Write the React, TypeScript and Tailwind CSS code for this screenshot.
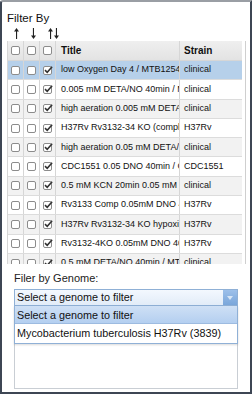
import clsx from 'clsx';

type Row = { title: string; strain: string };

const rows: Row[] = [
  { title: 'low Oxygen Day 4 / MTB1254', strain: 'clinical' },
  { title: '0.005 mM DETA/NO 40min / MTB', strain: 'clinical' },
  { title: 'high aeration 0.005 mM DETA/NO', strain: 'clinical' },
  { title: 'H37Rv Rv3132-34 KO (complemented)', strain: 'H37Rv' },
  { title: 'high aeration 0.05 mM DETA/NO', strain: 'clinical' },
  { title: 'CDC1551 0.05 DNO 40min / CDC', strain: 'CDC1551' },
  { title: '0.5 mM KCN 20min 0.05 mM DNO', strain: 'clinical' },
  { title: 'Rv3133 Comp 0.05mM DNO 40min', strain: 'H37Rv' },
  { title: 'H37Rv Rv3132-34 KO hypoxia', strain: 'H37Rv' },
  { title: 'Rv3132-4KO 0.05mM DNO 40min', strain: 'H37Rv' },
  { title: '0.5 mM DETA/NO 40min / MTB', strain: 'clinical' },
];

function Box({ checked }: { checked?: boolean }) {
  return (
    <div className="w-[9px] h-[9px] border border-[#8c8c8c] rounded-[2px] bg-white relative">
      {checked && (
        <svg viewBox="0 0 9 9" className="absolute -left-px -top-[2px] w-[10px] h-[10px]">
          <path d="M1.8 4.6 L3.8 6.6 L8.2 1.6" stroke="#333" strokeWidth="1.4" fill="none" />
        </svg>
      )}
    </div>
  );
}

function Arrow({ down }: { down?: boolean }) {
  return (
    <svg viewBox="0 0 5 11" className={clsx('w-[5px] h-[11px]', down && 'rotate-180')}>
      <path d="M2.5 0 L5 3.5 L0 3.5 Z" fill="#222" />
      <rect x="2" y="3" width="1.1" height="8" fill="#222" />
    </svg>
  );
}

const cell = 'border-r border-[#d6d6d6] flex items-center';

export default function App() {
  return (
    <div className="w-[252px] h-[394px] bg-white border-2 border-[#3d4654] border-t-[#9a9ea4] rounded-tl-[3px] font-['Liberation_Sans',Arial,sans-serif] text-[#111] overflow-hidden">
      <div className="pl-[5px] pt-[10px] text-[11.5px] leading-[13px]">Filter By</div>
      <div className="flex items-end h-[14px] pl-[12px] gap-[12px]">
        <Arrow />
        <Arrow down />
        <div className="flex gap-[1px]">
          <Arrow />
          <Arrow down />
        </div>
      </div>

      {/* TABLE */}
      <div className="ml-[5px] mt-[2px] w-[239px] h-[223px] overflow-hidden border-r border-[#cfcfcf]">
        <div className="w-[235px] border-l border-[#d6d6d6]">
          <div className="grid grid-cols-[16px_16px_16px_124px_63px] h-[20px] bg-gradient-to-b from-[#efefef] to-[#e3e3e3] border-b border-[#d6d6d6]">
            <div className={clsx(cell, 'justify-center')}><Box /></div>
            <div className={clsx(cell, 'justify-center')}><Box /></div>
            <div className={clsx(cell, 'justify-center')}><Box /></div>
            <div className={clsx(cell, 'pl-[5px] text-[10px] font-bold')}>Title</div>
            <div className={clsx(cell, 'pl-[4px] text-[10px] font-bold border-r-0')}>Strain</div>
          </div>
          {rows.map((r, i) => (
            <div
              key={i}
              className={clsx(
                'grid grid-cols-[16px_16px_16px_124px_63px] h-[19.3px] border-b border-[#dcdcdc] text-[9px]',
                i === 0 ? 'bg-[#b6d0ea]' : i % 2 === 0 ? 'bg-[#f2f2f2]' : 'bg-white'
              )}
            >
              <div className={clsx(cell, 'justify-center')}><Box /></div>
              <div className={clsx(cell, 'justify-center')}><Box /></div>
              <div className={clsx(cell, 'justify-center')}><Box checked /></div>
              <div className={clsx(cell, 'pl-[5px] overflow-hidden whitespace-nowrap')}>{r.title}</div>
              <div className={clsx(cell, 'pl-[4px] overflow-hidden whitespace-nowrap border-r-0')}>{r.strain}</div>
            </div>
          ))}
        </div>
      </div>

      {/* GENOME FILTER */}
      <div className="pl-[12px] pt-[7px] text-[11px] leading-[14px] text-[#222]">Filer by Genome:</div>
      <div className="ml-[12px] mt-[4px] w-[224px] h-[100px] border border-[#c9ced4] border-t-0">
        <div className="flex h-[17px] border border-[#8fb0d6] bg-gradient-to-b from-[#f3f8fe] to-[#e2ecf8] -mx-px">
          <div className="flex-1 pl-[2px] text-[10.8px] leading-[15px] overflow-hidden whitespace-nowrap">
            Select a genome to filter
          </div>
          <div className="w-[14px] bg-gradient-to-b from-[#9dc0ea] to-[#7aa6da] flex items-center justify-center">
            <svg viewBox="0 0 6 4" className="w-[6px] h-[4px]">
              <path d="M0 0 L6 0 L3 4 Z" fill="#d8e6f6" />
            </svg>
          </div>
        </div>
        <div className="-mx-px border border-t-0 border-[#8fb0d6] shadow-[0_1px_2px_rgba(0,0,0,0.15)]">
          <div className="h-[18px] pl-[2px] text-[10.8px] leading-[18px] bg-gradient-to-b from-[#cfe0f5] to-[#b4cff0] border-b border-[#9dbbe0] whitespace-nowrap">
            Select a genome to filter
          </div>
          <div className="h-[19px] pl-[2px] text-[10.8px] leading-[19px] bg-white whitespace-nowrap">
            Mycobacterium tuberculosis H37Rv (3839)
          </div>
        </div>
      </div>
    </div>
  );
}
